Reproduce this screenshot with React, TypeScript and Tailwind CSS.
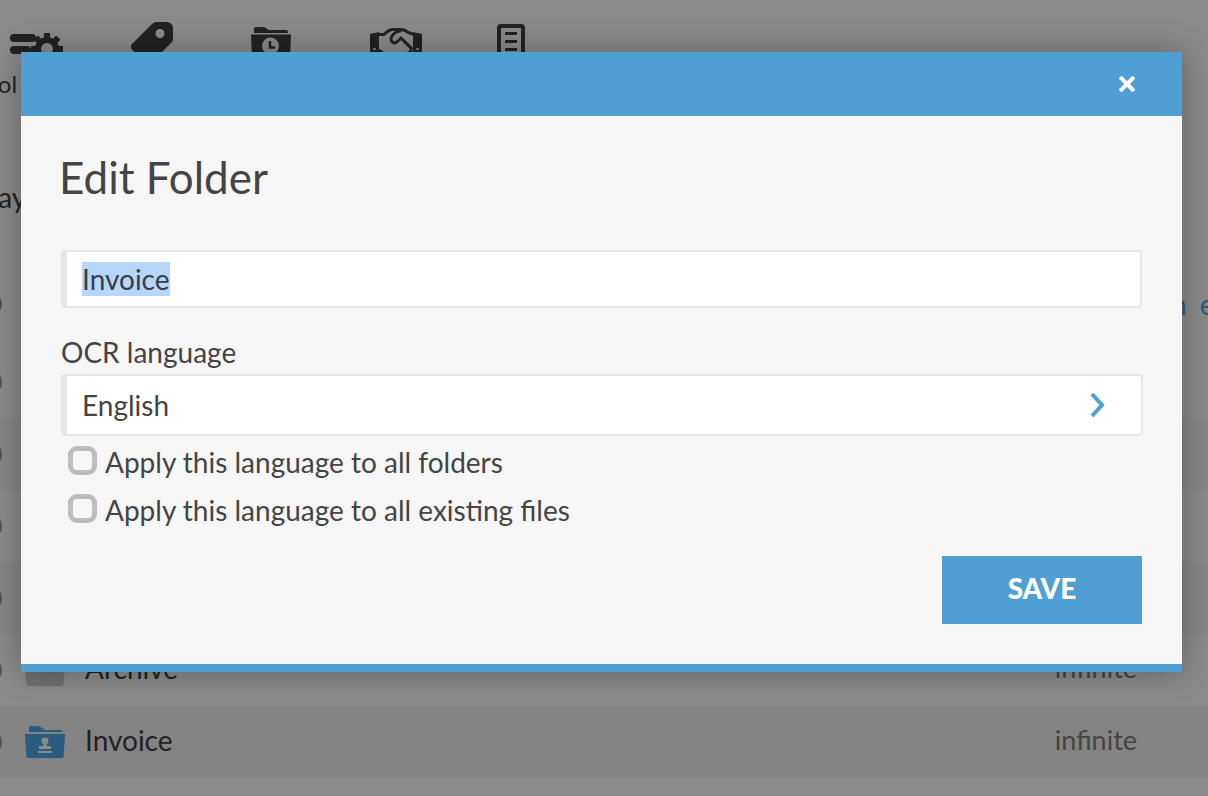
import React from "react";

const gearTeeth = Array.from({ length: 8 }, (_, i) => i * 45);

const GearIcon = () => (
  <svg width="54" height="34" viewBox="0 0 54 34" fill="#3f3f3f">
    <rect x="1" y="1" width="26" height="8" rx="4" />
    <rect x="1" y="13" width="21" height="8" rx="4" />
    <g transform="translate(38 16)">
      {gearTeeth.map((a) => (
        <rect key={a} x="-3" y="-16" width="6" height="7" transform={`rotate(${a})`} />
      ))}
      <path fillRule="evenodd" d="M0-12a12 12 0 1 0 0 24 12 12 0 0 0 0-24z M0-6a6 6 0 1 1 0 12 6 6 0 0 1 0-12z" />
    </g>
  </svg>
);
const TagIcon = () => (
  <svg width="42" height="42" viewBox="0 0 42 42">
    <path fill="#3f3f3f" fillRule="evenodd" d="M25 0h11a6 6 0 0 1 6 6v11a5 5 0 0 1-1.500 3.500L20 41a4 4 0 0 1-5.500 0L1 27.500a4 4 0 0 1 0-5.500L21.500 1.500A5 5 0 0 1 25 0z M29 7a4.500 4.500 0 1 0 0 9 4.500 4.500 0 0 0 0-9z" />
  </svg>
);
const ClockFolder = () => (
  <svg width="40" height="34" viewBox="0 0 40 34">
    <path fill="#3f3f3f" d="M3 2a2 2 0 0 1 2-2h8l5 3h17a2 2 0 0 1 2 2v1H3z" />
    <path fill="#3f3f3f" d="M0 7.500h40l-1 24.500a2 2 0 0 1-2 2H3a2 2 0 0 1-2-2z" />
    <circle cx="19.500" cy="19" r="8.500" fill="#fff" />
    <path d="M19 14v6.500h5" stroke="#3f3f3f" strokeWidth="2.500" fill="none" />
  </svg>
);
const Handshake = () => (
  <svg width="52" height="30" viewBox="0 0 52 30" fill="none" stroke="#3f3f3f" strokeWidth="3">
    <path fill="#3f3f3f" stroke="none" d="M0 6l9-2v22H0zM43 4l9 2v20h-9z" />
    <circle cx="4.500" cy="21" r="1.300" fill="#fff" stroke="none" />
    <circle cx="47.500" cy="21" r="1.300" fill="#fff" stroke="none" />
    <path d="M8 6.500h6c3-3 5-5 9-5h7c3 0 6 1 8 3l6 2" />
    <path d="M31 3c-4 0-7 2-9 5-2 3-1 6 2 7 3 0 5-3 7-5l10 10c1 2 0 4-3 5M9 22l6 5" />
  </svg>
);
const DocIcon = () => (
  <svg width="28" height="34" viewBox="0 0 28 34" fill="#3f3f3f">
    <path fillRule="evenodd" d="M4 0h20a4 4 0 0 1 4 4v30H0V4a4 4 0 0 1 4-4z M5 4a1 1 0 0 0-1 1v29h20V5a1 1 0 0 0-1-1z" />
    <rect x="8" y="8" width="12" height="3" />
    <rect x="8" y="16" width="12" height="3" />
    <rect x="8" y="24" width="12" height="3" />
  </svg>
);
const FolderStamp = ({ gray }: { gray?: boolean }) => (
  <svg width="40" height="32" viewBox="0 0 40 32">
    <path fill={gray ? "#cfcfcf" : "#4fa9ec"} d="M4 2a2 2 0 0 1 2-2h8l6 4h16a1.500 1.500 0 0 1 1.500 1.500V6H4z" />
    <path fill={gray ? "#cfcfcf" : "#4fa9ec"} d="M0 9a1 1 0 0 1 1-1h38a1 1 0 0 1 1 1l-1.300 21a2 2 0 0 1-2 2H3.300a2 2 0 0 1-2-2z" />
    {!gray && (
      <g fill="#fff">
        <circle cx="20" cy="15" r="3.500" />
        <path d="M18.500 17h3v3h4.500v3H14v-3h4.500z" />
        <rect x="13" y="25" width="14" height="2" />
      </g>
    )}
  </svg>
);

function Row({ cls, name, gray, blue }: { cls: string; name: string; gray?: boolean; blue?: boolean }) {
  return (
    <div className={`flex items-center ${cls}`}>
      <div className="-ml-[24px] h-[26px] w-[26px] shrink-0 rounded-full border-2 border-[#999]" />
      <div className="ml-[23px] flex w-[60px] shrink-0"><FolderStamp gray={gray} /></div>
      <span className="pb-[4px] text-[28px] text-[#3f3f3f]">{name}</span>
      <span className="ml-auto mr-[71px] pb-[4px] text-[27px] text-[#7e7e7e]">infinite</span>
      {blue && <span className="-ml-[57px] -mr-[37px] w-[74px] shrink-0 whitespace-nowrap text-[28px] tracking-[3px] text-[#4fa9ec]">n e</span>}
    </div>
  );
}

export default function App() {
  return (
    <div className="relative h-[796px] w-full overflow-hidden bg-white font-['Lato','Liberation_Sans',sans-serif]">
      {/* page behind the dialog */}
      <div className="flex h-[262px] flex-col">
        <div className="flex h-[70px] items-start pt-[22px]">
          <div className="flex w-[72px] justify-center pt-[11px]"><GearIcon /></div>
          <div className="ml-[59px] flex w-[42px]"><TagIcon /></div>
          <div className="ml-[78px] flex w-[40px] pt-[5px]"><ClockFolder /></div>
          <div className="ml-[79px] flex w-[52px] pt-[6px]"><Handshake /></div>
          <div className="ml-[75px] flex w-[28px] pt-[2px]"><DocIcon /></div>
        </div>
        <div className="-ml-[27px] text-[24px] leading-[28px] text-[#3f3f3f]">Tool</div>
        <div className="mt-[82px] -ml-[64px] text-[28px] leading-[34px] text-[#3f3f3f]">Display</div>
      </div>
      <Row cls="h-[84px]" name="Inbox" blue />
      <Row cls="h-[72px]" name="Contracts" gray />
      <Row cls="h-[72px] bg-[#f8f8f8]" name="Receipts" gray />
      <Row cls="h-[72px]" name="Reports" gray />
      <Row cls="h-[72px] bg-[#f8f8f8]" name="Taxes" gray />
      <Row cls="h-[72px]" name="Archive" gray />
      <Row cls="h-[72px] bg-[#f3f3f3]" name="Invoice" />

      {/* overlay */}
      <div className="absolute inset-0 bg-black/[.46]" />

      {/* dialog */}
      <div className="absolute left-[21px] top-[52px] flex h-[620px] w-[1161px] flex-col bg-[#f6f6f6] shadow-[0_0_30px_rgba(0,0,0,0.3)]">
        <div className="flex h-16 shrink-0 items-center justify-end bg-[#4f9fd4] pr-[47px]">
          <svg width="16" height="16" viewBox="0 0 16 16" stroke="#fff" strokeWidth="4" strokeLinecap="square">
            <path d="M2.500 2.500l11 11M13.500 2.500l-11 11" />
          </svg>
        </div>
        <div className="flex flex-1 flex-col px-10 text-[#444]">
          <h1 className="-ml-[2px] mt-[34px] text-[44px] leading-[54px] text-[#444]">Edit Folder</h1>
          <div className="mt-[46px] flex h-[58px] items-center rounded border-2 border-l-[6px] border-[#e6e6e6] bg-white pl-[15px] text-[28px]">
            <span className="bg-[#b7d6fb] leading-[34px] text-[#3a3f47]">Invoice</span>
          </div>
          <div className="mt-[26px] pb-[2px] text-[28px] leading-[36px]">OCR language</div>
          <div className="mt-[2px] flex h-[62px] w-[1082px] items-center justify-between rounded border-2 border-l-[6px] border-[#e6e6e6] bg-white pl-[15px] pr-[36px] text-[28px]">
            <span>English</span>
            <svg width="16" height="26" viewBox="0 0 16 26" fill="none" stroke="#4f9fd4" strokeWidth="4">
              <path d="M3 2l10 11L3 24" />
            </svg>
          </div>
          <label className="mt-[10px] flex h-[30px] items-center pl-[7px]">
            <span className="mb-[2px] h-[29px] w-[29px] shrink-0 rounded-[9px] border-[5px] border-[#bdbdbd]" />
            <span className="ml-[8px] pt-[2px] text-[28px]">Apply this language to all folders</span>
          </label>
          <label className="mt-[18px] flex h-[30px] items-center pl-[7px]">
            <span className="mb-[2px] h-[29px] w-[29px] shrink-0 rounded-[9px] border-[5px] border-[#bdbdbd]" />
            <span className="ml-[8px] pt-[2px] text-[28px]">Apply this language to all existing files</span>
          </label>
          <div className="mt-[32px] flex justify-end">
            <button className="h-[68px] w-[200px] bg-[#4f9fd4] pb-[4px] text-[28px] font-black text-white">SAVE</button>
          </div>
        </div>
        <div className="h-2 shrink-0 bg-[#4f9fd4]" />
      </div>
    </div>
  );
}
